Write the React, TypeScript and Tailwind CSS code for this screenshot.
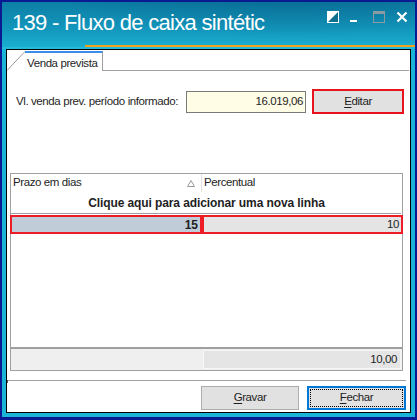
import React from "react";

function U({ c, rest }: { c: string; rest: string }) {
  return (
    <span>
      <span className="underline underline-offset-2">{c}</span>
      {rest}
    </span>
  );
}

export default function App() {
  return (
    <div className="w-[417px] h-[420px] bg-[#0a1a92] pt-[2px] pl-[2px] pr-[2px] pb-[3px] flex font-['Liberation_Sans',Tahoma,sans-serif] text-[11.5px] tracking-[-0.4px] text-[#1e1e1e]">
      <div className="flex-1 flex flex-col bg-[#1ab4d6]">
        {/* title bar */}
        <div className="relative h-[45px] bg-[linear-gradient(180deg,#0d7fa6_0%,#1294ba_55%,#1aaed0_100%)] overflow-hidden">
          <div className="absolute inset-0 bg-[radial-gradient(ellipse_at_70%_-40%,rgba(0,60,100,0.35),transparent_60%)]" />
          <div className="absolute left-[10px] top-[8px] text-white text-[22px] leading-[26px] font-['Liberation_Sans',Arial,sans-serif] tracking-[-0.7px] whitespace-nowrap">
            139 - Fluxo de caixa sintétic
          </div>
          <div className="absolute right-0 top-[9px] flex items-start">
            <svg width="12" height="12" viewBox="0 0 12 12" className="mr-[11px]">
              <rect x="0.5" y="0.5" width="11" height="11" fill="#0c6f8e" stroke="#fff" />
              <polygon points="0,0 12,0 0,12" fill="#fff" />
            </svg>
            <div className="mt-[9px] w-[7px] h-[2px] bg-white mr-[16px]" />
            <svg width="12" height="12" viewBox="0 0 12 12" className="mr-[11px]">
              <rect x="0.5" y="0.5" width="11" height="11" fill="none" stroke="#8a9aa0" />
              <rect x="0" y="0" width="12" height="3" fill="#8a9aa0" />
            </svg>
            <svg width="12" height="12" viewBox="0 0 12 12" className="mr-[7px]">
              <path d="M1.5 1.5 L10.5 10.5 M10.5 1.5 L1.5 10.5" stroke="#fff" strokeWidth="2.2" />
            </svg>
          </div>
          <div className="absolute left-[83px] right-0 bottom-0 h-[2px] bg-[#f4a11d]" />
        </div>
        <div className="h-[2px] bg-[#22bcd9]" />
        {/* client area */}
        <div className="flex-1 flex px-[4px] pb-[4px]">
          <div className="flex-1 border border-black bg-white flex flex-col">
            {/* tabs */}
            <div className="flex items-stretch h-[21px]">
              <svg width="18" height="21" viewBox="0 0 18 21" className="shrink-0">
                <line x1="0" y1="20.5" x2="18" y2="1.5" stroke="#9a9a9a" strokeWidth="1" />
              </svg>
              <div className="mt-[1px] w-[78px] border-t-2 border-[#3a8ee8] border-r border-r-[#a0a0a0] pl-[2px] pt-[3px] leading-[14px] bg-white whitespace-nowrap">
                Venda prevista
              </div>
              <div className="flex-1 mr-[1px] border-b border-[#a0a0a0]" />
            </div>
            {/* form row */}
            <div className="flex items-center mt-[18px] pl-[9px]">
              <span className="w-[170px] whitespace-nowrap">Vl. venda prev. período informado:</span>
              <div className="w-[120px] h-[22px] border border-[#7a7a7a] bg-[#fffde6] flex items-center justify-end pr-[2px]">
                16.019,06
              </div>
              <div className="ml-[6px] w-[92px] h-[25px] border-2 border-[#e8141c] bg-[#e1e1e1] flex items-center justify-center">
                <U c="E" rest="ditar" />
              </div>
            </div>
            {/* grid */}
            <div className="mt-[59px] ml-[3px] w-[393px] h-[198px] border border-[#a0a0a0] flex flex-col">
              <div className="h-[18px] flex items-center shrink-0">
                <div className="w-[190px] pl-[2px] flex items-center justify-between pr-[6px] h-full">
                  <span>Prazo em dias</span>
                  <svg width="8" height="7" viewBox="0 0 8 7">
                    <polygon points="4,0.5 7.5,6.5 0.5,6.5" fill="none" stroke="#9a9a9a" />
                  </svg>
                </div>
                <div className="w-px h-full bg-[#e3e3e3]" />
                <div className="pl-[2px]">Percentual</div>
              </div>
              <div className="h-[21px] flex items-center justify-center font-bold shrink-0 text-[12px] tracking-[-0.1px]">
                Clique aqui para adicionar uma nova linha
              </div>
              <div className="h-px bg-[#a0a0a0] mr-[1px] shrink-0" />
              <div className="h-[19px] mt-[1px] -mx-px flex shrink-0">
                <div className="w-[192px] border-2 border-[#ee1c24] bg-[#c0ccd8] flex items-center justify-end pr-[2px] font-bold text-[12px] tracking-normal">
                  15
                </div>
                <div className="flex-1 border-2 border-[#ee1c24] bg-[#e4e4e4] flex items-center justify-end pr-[2px]">
                  10
                </div>
              </div>
              <div className="flex-1" />
              <div className="h-[2px] bg-[#a0a0a0] shrink-0" />
              <div className="h-[21px] bg-[#efefef] flex items-center shrink-0">
                <div className="w-[192px]" />
                <div className="flex-1 h-[19px] mr-[1px] bg-[#e5e5e5] border border-[#f7f7f7] flex items-center justify-end pr-[3px]">
                  10,00
                </div>
              </div>
            </div>
            {/* separator */}
            <div className="mt-[9px] mr-[4px] h-px bg-[#a0a0a0] relative">
              <div className="absolute left-0 top-0 w-px h-[3px] bg-[#555]" />
            </div>
            {/* buttons */}
            <div className="mt-[5px] flex justify-end pr-[4px] gap-[8px]">
              <div className="w-[98px] h-[24px] border border-[#adadad] bg-[#e1e1e1] flex items-center justify-center">
                <U c="G" rest="ravar" />
              </div>
              <div className="w-[99px] h-[24px] border-2 border-[#0078d7] bg-[#e1e1e1] p-px">
                <div className="w-full h-full border border-dotted border-black flex items-center justify-center">
                  <U c="F" rest="echar" />
                </div>
              </div>
            </div>
          </div>
        </div>
      </div>
    </div>
  );
}
